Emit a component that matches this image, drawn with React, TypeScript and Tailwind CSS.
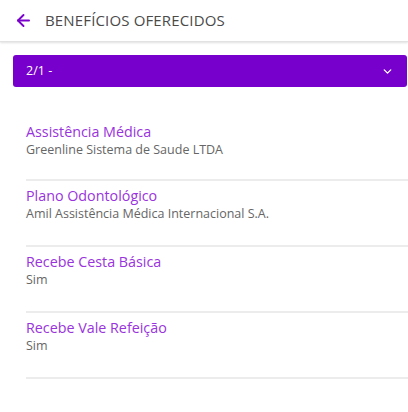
import { ArrowLeft, ChevronDown } from 'lucide-react';

const beneficios = [
    { titulo: 'Assistência Médica', valor: 'Greenline Sistema de Saude LTDA' },
    { titulo: 'Plano Odontológico', valor: 'Amil Assistência Médica Internacional S.A.' },
    { titulo: 'Recebe Cesta Básica', valor: 'Sim' },
    { titulo: 'Recebe Vale Refeição', valor: 'Sim' },
];

export default function App() {
    return (
        <div className="min-h-[412px] bg-white font-['Open_Sans',sans-serif]">
            {/* Header */}
            <header className="h-[42px] flex items-center pl-[14px] gap-[12px] border-b border-[#e2e2e2] shadow-[0_1px_2px_rgba(0,0,0,0.12)]">
                <ArrowLeft className="w-[19px] h-[19px] text-[#7a00cc]" strokeWidth={2.4} />
                <h1 className="text-[15px] tracking-[0.15px] text-[#4a4a4a]">BENEFÍCIOS OFERECIDOS</h1>
            </header>

            {/* Seletor */}
            <div className="pt-[13px] pl-[13px] pr-[1px]">
                <button className="w-full h-[32px] rounded-[3px] bg-[#7700cc] flex items-center justify-between pl-[13px] pr-[13px] text-white text-[12.5px]">
                    <span>2/1 -</span>
                    <ChevronDown className="w-[13px] h-[13px]" strokeWidth={2.5} />
                </button>
            </div>

            {/* Lista */}
            <ul className="pl-[26px] pt-[36px]">
                {beneficios.map((b) => (
                    <li key={b.titulo} className="h-[66px] border-b-2 border-[#ececec] pt-[6px] first:pt-0 first:h-[58px]">
                        <div className="text-[14.3px] leading-[18px] text-[#9933dd]">{b.titulo}</div>
                        <div className="text-[12.5px] leading-[18px] text-[#666]">{b.valor}</div>
                    </li>
                ))}
            </ul>
        </div>
    );
}
